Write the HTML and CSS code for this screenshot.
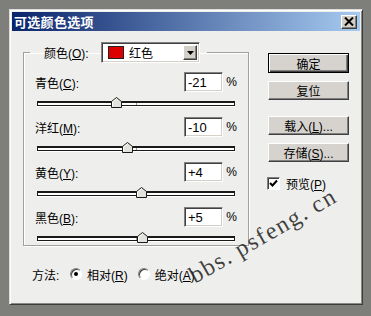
FILE: index.html
```html
<!DOCTYPE html>
<html lang="zh">

<head>
  <meta charset="utf-8">
  <title>可选颜色选项</title>
  <link rel="stylesheet" href="styles.css">
</head>

<body>
  <div class="dialog">
    <div class="titlebar">
      <span class="title">可选颜色选项</span>
      <span class="close-btn">
        <svg width="10" height="9" viewBox="0 0 10 9"><path d="M1 0.5 L9 8.5 M9 0.5 L1 8.5" stroke="#000" stroke-width="2"/></svg>
      </span>
    </div>
    <div class="content">
      <div class="main">
        <fieldset class="group">
          <legend class="legend">
            <span class="lbl">颜色(<u>O</u>):</span>
            <span class="select">
              <span class="swatch"></span>
              <span class="select-text">红色</span>
              <span class="select-arrow">
                <svg width="7" height="4" viewBox="0 0 7 4"><path d="M0 0 H7 L3.5 4 Z" fill="#000"/></svg>
              </span>
            </span>
          </legend>

          <div class="row">
            <div class="row-head">
              <span class="lbl">青色(<u>C</u>):</span>
              <span class="field">-21</span>
              <span class="pct">%</span>
            </div>
            <div class="track">
              <span class="tick"></span>
              <svg class="thumb" style="left: 72.5px" width="11" height="11" viewBox="0 0 11 11"><path d="M0.5 10.5 V4.5 L5.5 0.5 L10.5 4.5 V10.5 Z" fill="#e4e2dc" stroke="#1a1a1a"/><path d="M1.5 9.5 V5 L5.5 1.8" fill="none" stroke="#fff"/></svg>
            </div>
          </div>

          <div class="row">
            <div class="row-head">
              <span class="lbl">洋红(<u>M</u>):</span>
              <span class="field">-10</span>
              <span class="pct">%</span>
            </div>
            <div class="track">
              <span class="tick"></span>
              <svg class="thumb" style="left: 83.5px" width="11" height="11" viewBox="0 0 11 11"><path d="M0.5 10.5 V4.5 L5.5 0.5 L10.5 4.5 V10.5 Z" fill="#e4e2dc" stroke="#1a1a1a"/><path d="M1.5 9.5 V5 L5.5 1.8" fill="none" stroke="#fff"/></svg>
            </div>
          </div>

          <div class="row">
            <div class="row-head">
              <span class="lbl">黄色(<u>Y</u>):</span>
              <span class="field">+4</span>
              <span class="pct">%</span>
            </div>
            <div class="track">
              <span class="tick"></span>
              <svg class="thumb" style="left: 97.5px" width="11" height="11" viewBox="0 0 11 11"><path d="M0.5 10.5 V4.5 L5.5 0.5 L10.5 4.5 V10.5 Z" fill="#e4e2dc" stroke="#1a1a1a"/><path d="M1.5 9.5 V5 L5.5 1.8" fill="none" stroke="#fff"/></svg>
            </div>
          </div>

          <div class="row row-last">
            <div class="row-head">
              <span class="lbl">黑色(<u>B</u>):</span>
              <span class="field">+5</span>
              <span class="pct">%</span>
            </div>
            <div class="track">
              <span class="tick"></span>
              <svg class="thumb" style="left: 98.5px" width="11" height="11" viewBox="0 0 11 11"><path d="M0.5 10.5 V4.5 L5.5 0.5 L10.5 4.5 V10.5 Z" fill="#e4e2dc" stroke="#1a1a1a"/><path d="M1.5 9.5 V5 L5.5 1.8" fill="none" stroke="#fff"/></svg>
            </div>
          </div>
        </fieldset>

        <div class="method">
          <span class="method-label">方法:</span>
          <span class="radio checked"></span>
          <span class="radio-text">相对(<u>R</u>)</span>
          <span class="radio"></span>
          <span class="radio-text">绝对(<u>A</u>)</span>
        </div>
      </div>

      <div class="side">
        <div class="btn btn-default"><span>确定</span></div>
        <div class="btn btn-reset"><span>复位</span></div>
        <div class="btn btn-load"><span>载入(<u>L</u>)...</span></div>
        <div class="btn btn-save"><span>存储(<u>S</u>)...</span></div>
        <div class="check-row">
          <span class="checkbox">
            <svg width="9" height="9" viewBox="0 0 9 9"><path d="M1 4 L3.5 6.5 L8 1.5" fill="none" stroke="#000" stroke-width="2"/></svg>
          </span>
          <span class="check-text">预览(<u>P</u>)</span>
        </div>
      </div>
    </div>
  </div>

  <div class="watermark">bbs. psfeng. cn</div>
</body>

</html>
```

FILE: styles.css
```css
*,
*::before,
*::after {
  box-sizing: border-box;
}

body {
  margin: 0;
  padding: 9px 0 0 9px;
  width: 371px;
  height: 316px;
  overflow: hidden;
  position: relative;
  background-color: #7e7e7a;
  font-family: "Liberation Sans", "Noto Sans CJK SC", sans-serif;
  font-size: 12px;
  color: #000;
}

u {
  text-decoration: underline;
  text-underline-offset: 1px;
}

.dialog {
  width: 354px;
  height: 296px;
  padding: 2px;
  background-color: #eeeeec;
  border: 1px solid;
  border-color: #dcdcd8 #3c3c3c #3c3c3c #dcdcd8;
  box-shadow: inset 1px 1px 0 #fff, inset -1px -1px 0 #8a8a86;
}

.titlebar {
  height: 19px;
  display: flex;
  align-items: center;
  justify-content: space-between;
  padding: 0 3px 0 2px;
  background: linear-gradient(to right, #0a246a, #a6caf0);
}

.title {
  color: #fff;
  font-weight: bold;
  font-size: 13px;
  letter-spacing: 0.3px;
}

.close-btn {
  width: 16px;
  height: 14px;
  display: flex;
  align-items: center;
  justify-content: center;
  background-color: #d4d0c8;
  border: 1px solid;
  border-color: #fff #404040 #404040 #fff;
  box-shadow: inset -1px -1px 0 #808080;
}

.content {
  display: flex;
  padding: 11px 0 0 11px;
}

.main {
  width: 226px;
}

.group {
  margin: 0;
  width: 226px;
  padding: 9px 11px 4px 6px;
  border: 1px solid #a0a09c;
  box-shadow: 1px 1px 0 #fff, inset 1px 1px 0 #fff;
}

.legend {
  width: 177px;
  height: 21px;
  padding: 0 7px 0 14px;
  display: flex;
  align-items: center;
  justify-content: space-between;
}

.select {
  width: 99px;
  height: 21px;
  display: flex;
  align-items: center;
  padding: 0 2px 0 6px;
  background-color: #fff;
  border: 1px solid;
  border-color: #808080 #fff #fff #808080;
  box-shadow: inset 1px 1px 0 #404040, inset -1px -1px 0 #d4d0c8;
}

.swatch {
  width: 16px;
  height: 13px;
  background-color: #dd0000;
  border: 1px solid #222;
}

.select-text {
  margin-left: 5px;
  flex: 1;
}

.select-arrow {
  width: 14px;
  height: 15px;
  display: flex;
  align-items: center;
  justify-content: center;
  background-color: #d4d0c8;
  border: 1px solid;
  border-color: #fff #404040 #404040 #fff;
  box-shadow: inset -1px -1px 0 #808080;
}

.row {
  height: 45px;
  padding-left: 5px;
}

.row-last {
  height: 34px;
}

.row-head {
  height: 20px;
  display: flex;
  align-items: center;
}

.row-head .lbl {
  flex: 1;
}

.field {
  width: 39px;
  height: 20px;
  padding: 2px 3px 0;
  font-size: 13px;
  background-color: #fff;
  border: 1px solid;
  border-color: #808080 #fff #fff #808080;
  box-shadow: inset 1px 1px 0 #404040, inset -1px -1px 0 #d4d0c8;
}

.pct {
  width: 14px;
  text-align: right;
}

.track {
  position: relative;
  margin: 9px 0 0 2px;
  width: 198px;
  height: 5px;
  background-color: #fff;
  border: 1px solid #1a1a1a;
  border-top-width: 2px;
  box-shadow: 0 1px 0 #fff;
}

.tick {
  position: absolute;
  left: 98px;
  top: 0;
  width: 1px;
  height: 2px;
  background-color: #9a9a96;
}

.thumb {
  position: absolute;
  top: -6px;
}

.method {
  margin-top: 20px;
  height: 16px;
  display: flex;
  align-items: center;
  padding-left: 9px;
}

.method-label {
  width: 38px;
}

.radio {
  width: 12px;
  height: 12px;
  border-radius: 50%;
  background-color: #fff;
  border: 1px solid;
  border-color: #808080 #fff #fff #808080;
  box-shadow: inset 1px 1px 0 #404040;
  display: flex;
  align-items: center;
  justify-content: center;
}

.radio.checked::after {
  content: "";
  width: 4px;
  height: 4px;
  border-radius: 50%;
  background-color: #000;
}

.radio-text {
  margin: 0 10px 0 5px;
}

.side {
  margin: 11px 0 0 19px;
  width: 81px;
  display: flex;
  flex-direction: column;
}

.btn {
  height: 19px;
  display: flex;
  align-items: center;
  justify-content: center;
  background-color: #d6d3ce;
  border: 1px solid;
  border-color: #fff #404040 #404040 #fff;
  box-shadow: inset -1px -1px 0 #808080;
}

.btn-default {
  height: 20px;
  border: 1px solid #000;
  box-shadow: inset 1px 1px 0 #fff, inset -1px -1px 0 #404040, inset -2px -2px 0 #808080;
}

.btn-reset {
  margin-top: 8px;
}

.btn-load {
  margin-top: 16px;
}

.btn-save {
  margin-top: 8px;
}

.check-row {
  margin: 13px 0 0 -1px;
  display: flex;
  align-items: center;
}

.checkbox {
  width: 13px;
  height: 13px;
  display: flex;
  align-items: center;
  justify-content: center;
  background-color: #fff;
  border: 1px solid;
  border-color: #808080 #fff #fff #808080;
  box-shadow: inset 1px 1px 0 #404040;
}

.check-text {
  margin-left: 6px;
}

.watermark {
  position: absolute;
  left: 198px;
  top: 262px;
  font-family: "Liberation Serif", serif;
  font-size: 24px;
  letter-spacing: 1.6px;
  word-spacing: -1px;
  color: rgba(30, 30, 30, 0.85);
  white-space: nowrap;
  transform: rotate(-30deg);
  transform-origin: left bottom;
}
```
